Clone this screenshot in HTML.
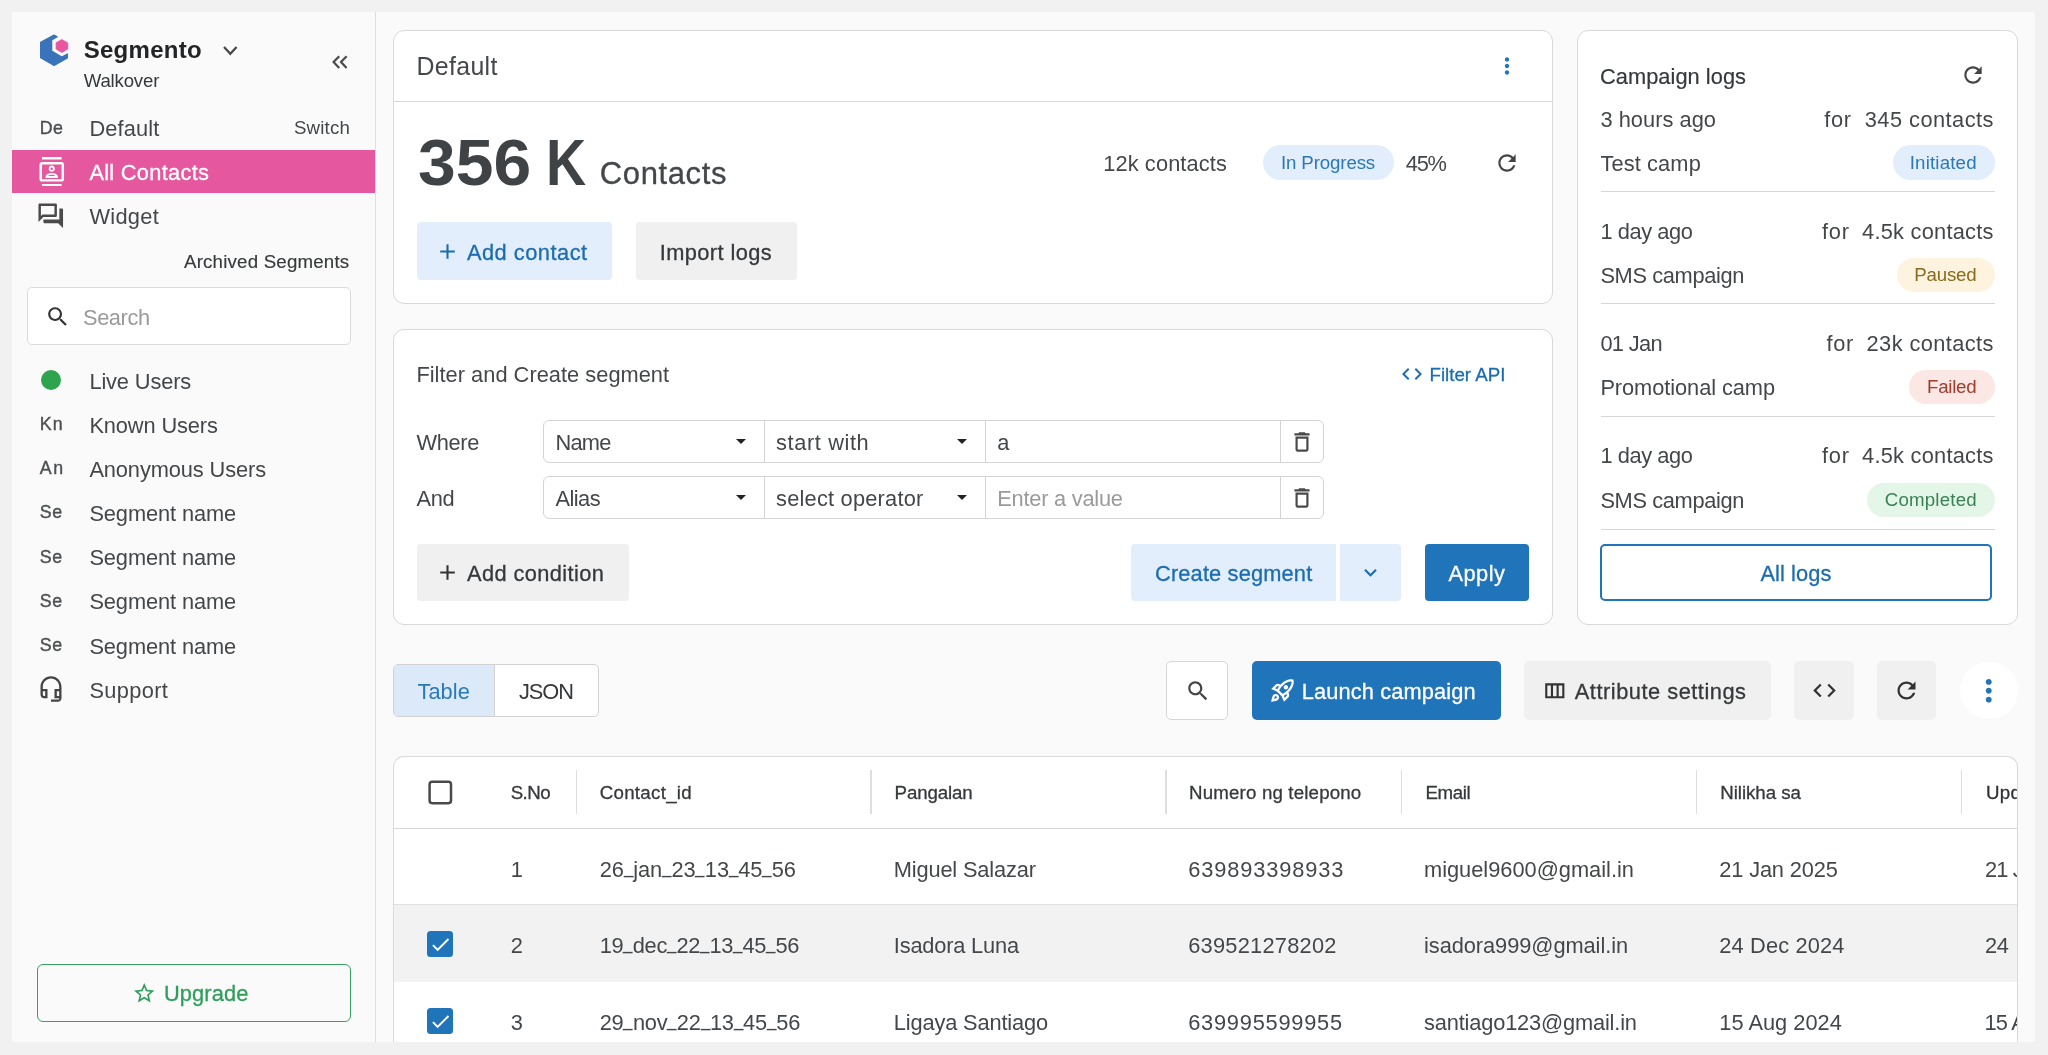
<!DOCTYPE html>
<html><head><meta charset="utf-8"><title>Segmento</title><style>
*{margin:0;padding:0;box-sizing:border-box}
html,body{width:2048px;height:1055px;overflow:hidden}
body{background:#f1f1f1;font-family:"Liberation Sans",sans-serif;position:relative}
#app{position:absolute;left:0;top:0;width:2048px;height:1055px;will-change:transform}
.b{position:absolute;display:block}
.t{position:absolute;white-space:nowrap;line-height:1;display:block}
.u{display:inline-block;font-style:normal;width:9.4px;transform-origin:0 50%;transform:translateY(-4.4px) scaleX(.775)}
</style></head><body>
<div id="app">
<div class="b" style="left:12px;top:12px;width:2023px;height:1030px;background:#fafafa;border-radius:3px;"></div>
<div class="b" style="left:375px;top:12px;width:1px;height:1030px;background:#dedede;"></div>
<svg class="b" style="left:38px;top:33px" width="34" height="36" viewBox="0 0 34 36">
<path fill="#3a73b9" stroke="#3a73b9" stroke-width="1.2" stroke-linejoin="round" d="M16.1 2.1 L19.2 3.8 L13.7 7 L13.7 17.9 L23.8 24 L29.4 20.9 L29.4 25.1 L16.1 32.6 L2.6 24.8 L2.6 9.3 Z"></path>
<path fill="#e7569f" stroke="#e7569f" stroke-width="0.8" stroke-linejoin="round" d="M23.8 6.5 L29.8 9.9 L29.8 16 L23.8 19.4 L18.1 16.1 L18.1 9.7 Z"></path>
</svg>
<span class="t" style="font-size: 24px; color: rgb(34, 36, 38); font-weight: 700; left: 83.7px; top: 38px; letter-spacing: 0.283px;">Segmento</span>
<svg class="b" style="left:222.2px;top:44.8px" width="16.6" height="11.4" viewBox="-2 -2 16.6 11.4"><path fill="none" stroke="#4a4a4a" stroke-width="2.3" d="M0 0 L6.3 6.9 L12.6 0"></path></svg>
<span class="t" style="font-size: 18.6px; color: rgb(54, 57, 59); left: 83.7px; top: 72px; letter-spacing: -0.159px;">Walkover</span>
<svg class="b" style="left:330.3px;top:53px" width="20" height="18" viewBox="0 0 20 18"><path fill="none" stroke="#4a4a4a" stroke-width="2.2" d="M9.2 3.3 L3.6 9.1 L9.2 14.9 M16.6 3.3 L11 9.1 L16.6 14.9"></path></svg>
<span class="t" style="font-size: 17.8px; color: rgb(77, 80, 82); -webkit-text-stroke: 0.4px rgb(77, 80, 82); left: 39.7px; top: 120px; letter-spacing: 0.466px;">De</span>
<span class="t" style="font-size: 21.8px; color: rgb(68, 71, 74); left: 89.4px; top: 118px; letter-spacing: 0.154px;">Default</span>
<span class="t" style="font-size: 18.7px; color: rgb(68, 71, 74); left: 293.9px; top: 119px; letter-spacing: 0.191px;">Switch</span>
<div class="b" style="left:12px;top:149.6px;width:363px;height:43.80000000000001px;background:#e5579f;"></div>
<svg class="b" style="left:36.55px;top:156.65px;" width="29.5" height="29.5" viewBox="0 0 24 24"><path fill="#fff" d="M20 4H4c-1.1 0-2 .9-2 2v12c0 1.1.9 2 2 2h16c1.1 0 2-.9 2-2V6c0-1.1-.9-2-2-2zm0 14H4V6h16v12zM4 0h16v2H4zm0 22h16v2H4zm8-10c1.38 0 2.5-1.12 2.5-2.5S13.38 7 12 7 9.5 8.12 9.5 9.5 10.62 12 12 12zm0-3.5c.55 0 1 .45 1 1s-.45 1-1 1-1-.45-1-1 .45-1 1-1zm5 7.49C17 13.9 13.69 13 12 13s-5 .9-5 2.99V17h10v-1.01zm-8.19-.49c.61-.52 2.03-1 3.19-1 1.17 0 2.59.48 3.2 1H8.81z"></path></svg>
<span class="t" style="font-size: 21.8px; color: rgb(255, 255, 255); -webkit-text-stroke: 0.3px rgb(255, 255, 255); left: 89.4px; top: 162px; letter-spacing: 0.291px;">All Contacts</span>
<svg class="b" style="left:36.45px;top:200.65px;" width="29.5" height="29.5" viewBox="0 0 24 24"><path fill="#4a4a4a" d="M15 4v7H5.17L4 12.17V4h11m1-2H3c-.55 0-1 .45-1 1v14l4-4h10c.55 0 1-.45 1-1V3c0-.55-.45-1-1-1zm5 4h-2v9H6v2c0 .55.45 1 1 1h11l4 4V7c0-.55-.45-1-1-1z"></path></svg>
<span class="t" style="font-size: 21.8px; color: rgb(68, 71, 74); left: 89.4px; top: 206px; letter-spacing: 0.311px;">Widget</span>
<span class="t" style="font-size: 18.7px; color: rgb(54, 57, 59); -webkit-text-stroke: 0.15px rgb(54, 57, 59); left: 184px; top: 253px; letter-spacing: 0.197px;">Archived Segments</span>
<div class="b" style="left:27px;top:286.9px;width:323.5px;height:58.200000000000045px;background:#fff;border:1.5px solid #dcdcdc;border-radius:5px;"></div>
<svg class="b" style="left:45.25px;top:304.25px;" width="25.5" height="25.5" viewBox="0 0 24 24"><path fill="#333" d="M15.5 14h-.79l-.28-.27C15.41 12.59 16 11.11 16 9.5 16 5.91 13.09 3 9.5 3S3 5.91 3 9.5 5.91 16 9.5 16c1.61 0 3.09-.59 4.23-1.57l.27.28v.79l5 4.99L20.49 19l-4.99-5zm-6 0C7.01 14 5 11.99 5 9.5S7.01 5 9.5 5 14 7.01 14 9.5 11.99 14 9.5 14z"></path></svg>
<span class="t" style="font-size: 21.8px; color: rgb(154, 154, 154); left: 83px; top: 307px; letter-spacing: -0.412px;">Search</span>
<span class="t" style="font-size: 21.8px; color: rgb(68, 71, 74); left: 89.4px; top: 371px; letter-spacing: -0.13px;">Live Users</span>
<span class="t" style="font-size: 21.8px; color: rgb(68, 71, 74); left: 89.4px; top: 415px; letter-spacing: -0.113px;">Known Users</span>
<span class="t" style="font-size: 17.8px; color: rgb(77, 80, 82); -webkit-text-stroke: 0.4px rgb(77, 80, 82); left: 39.7px; top: 416px; letter-spacing: 1.25px;">Kn</span>
<span class="t" style="font-size: 21.8px; color: rgb(68, 71, 74); left: 89.4px; top: 459px; letter-spacing: -0.1px;">Anonymous Users</span>
<span class="t" style="font-size: 17.8px; color: rgb(77, 80, 82); -webkit-text-stroke: 0.4px rgb(77, 80, 82); left: 39.7px; top: 460px; letter-spacing: 1.75px;">An</span>
<span class="t" style="font-size: 21.8px; color: rgb(68, 71, 74); left: 89.4px; top: 503px; letter-spacing: -0.093px;">Segment name</span>
<span class="t" style="font-size: 17.8px; color: rgb(77, 80, 82); -webkit-text-stroke: 0.4px rgb(77, 80, 82); left: 39.7px; top: 504px; letter-spacing: 0.75px;">Se</span>
<span class="t" style="font-size: 21.8px; color: rgb(68, 71, 74); left: 89.4px; top: 547px; letter-spacing: -0.093px;">Segment name</span>
<span class="t" style="font-size: 17.8px; color: rgb(77, 80, 82); -webkit-text-stroke: 0.4px rgb(77, 80, 82); left: 39.7px; top: 549px; letter-spacing: 0.75px;">Se</span>
<span class="t" style="font-size: 21.8px; color: rgb(68, 71, 74); left: 89.4px; top: 591px; letter-spacing: -0.093px;">Segment name</span>
<span class="t" style="font-size: 17.8px; color: rgb(77, 80, 82); -webkit-text-stroke: 0.4px rgb(77, 80, 82); left: 39.7px; top: 593px; letter-spacing: 0.75px;">Se</span>
<span class="t" style="font-size: 21.8px; color: rgb(68, 71, 74); left: 89.4px; top: 636px; letter-spacing: -0.093px;">Segment name</span>
<span class="t" style="font-size: 17.8px; color: rgb(77, 80, 82); -webkit-text-stroke: 0.4px rgb(77, 80, 82); left: 39.7px; top: 637px; letter-spacing: 0.75px;">Se</span>
<span class="t" style="font-size: 21.8px; color: rgb(68, 71, 74); left: 89.4px; top: 680px; letter-spacing: 0.343px;">Support</span>
<div class="b" style="left:41.3px;top:369.8px;width:20px;height:20px;border-radius:50%;background:#2ea44f"></div>
<svg class="b" style="left:37.30px;top:675.00px;" width="28" height="28" viewBox="0 0 24 24"><path fill="#444" d="M19 14v4h-2v-4h2M7 14v4H6c-.55 0-1-.45-1-1v-3h2m5-13c-4.97 0-9 4.03-9 9v7c0 1.66 1.34 3 3 3h3v-8H5v-2c0-3.87 3.13-7 7-7s7 3.13 7 7v2h-4v8h4v1h-7v2h6c1.66 0 3-1.34 3-3V10c0-4.97-4.03-9-9-9z"></path></svg>
<div class="b" style="left:36.7px;top:963.5px;width:314.3px;height:58.5px;border:1.7px solid #37a062;border-radius:6px;"></div>
<svg class="b" style="left:132.35px;top:980.95px;" width="24.5" height="24.5" viewBox="0 0 24 24"><path fill="#2f9e5b" d="M22 9.24l-7.19-.62L12 2 9.19 8.63 2 9.24l5.46 4.73L5.82 21 12 17.27 18.18 21l-1.63-7.03L22 9.24zM12 15.4l-3.76 2.27 1-4.28-3.32-2.88 4.38-.38L12 6.1l1.71 4.04 4.38.38-3.32 2.88 1 4.28L12 15.4z"></path></svg>
<span class="t" style="font-size: 21.8px; color: rgb(47, 158, 91); -webkit-text-stroke: 0.3px rgb(47, 158, 91); left: 164px; top: 983px; letter-spacing: 0.129px;">Upgrade</span>
<div class="b" style="left:393px;top:30px;width:1160px;height:274px;background:#fff;border:1px solid #d9d9d9;border-radius:11px;"></div>
<div class="b" style="left:394px;top:101px;width:1158px;height:1px;background:#d9d9d9;"></div>
<span class="t" style="font-size: 24.9px; color: rgb(68, 71, 74); left: 416.4px; top: 54px; letter-spacing: 0.354px;">Default</span>
<svg class="b" style="left:1494.00px;top:53.40px;" width="26" height="26" viewBox="0 0 24 24"><path fill="#2074ba" d="M12 8c1.1 0 2-.9 2-2s-.9-2-2-2-2 .9-2 2 .9 2 2 2zm0 2c-1.1 0-2 .9-2 2s.9 2 2 2 2-.9 2-2-.9-2-2-2zm0 6c-1.1 0-2 .9-2 2s.9 2 2 2 2-.9 2-2-.9-2-2-2z"></path></svg>
<span class="t" style="font-size: 64px; color: rgb(64, 67, 69); font-weight: 700; transform: scaleX(1.06); transform-origin: 0px 0px; left: 417.9px; top: 131px;">356</span>
<span class="t" style="font-size: 64px; color: rgb(64, 67, 69); font-weight: 700; transform: scaleX(0.868); transform-origin: 0px 0px; left: 546.1px; top: 131px;">K</span>
<span class="t" style="font-size: 31px; color: rgb(68, 71, 74); -webkit-text-stroke: 0.3px rgb(68, 71, 74); left: 599.8px; top: 158px; letter-spacing: 0.608px;">Contacts</span>
<span class="t" style="font-size: 21.8px; color: rgb(68, 71, 74); left: 1103.2px; top: 153px; letter-spacing: 0.12px;">12k contacts</span>
<div class="b" style="left:1262.8px;top:145.3px;width:130.79999999999995px;height:34.79999999999998px;background:#e2eefb;border-radius:18px;"></div>
<span class="t" style="font-size: 18.7px; color: rgb(42, 120, 184); left: 1281px; top: 154px; letter-spacing: -0.136px;">In Progress</span>
<span class="t" style="font-size: 21.8px; color: rgb(68, 71, 74); left: 1405.7px; top: 153px; letter-spacing: -1.17px;">45%</span>
<svg class="b" style="left:1494.20px;top:149.50px;" width="26" height="26" viewBox="0 0 24 24"><path fill="#444" d="M17.65 6.35C16.2 4.9 14.21 4 12 4c-4.42 0-7.99 3.58-7.99 8s3.57 8 7.99 8c3.73 0 6.84-2.55 7.73-6h-2.08c-.82 2.33-3.04 4-5.65 4-3.31 0-6-2.69-6-6s2.69-6 6-6c1.66 0 3.14.69 4.22 1.78L13 11h7V4l-2.35 2.35z"></path></svg>
<div class="b" style="left:417px;top:222px;width:195px;height:58px;background:#e2eefb;border-radius:4px;"></div>
<svg class="b" style="left:434.70px;top:239.10px;" width="25" height="25" viewBox="0 0 24 24"><path fill="#1b6cb0" d="M19 13h-6v6h-2v-6H5v-2h6V5h2v6h6v2z"></path></svg>
<span class="t" style="font-size: 21.8px; color: rgb(27, 108, 176); -webkit-text-stroke: 0.3px rgb(27, 108, 176); left: 466.9px; top: 242px; letter-spacing: 0.517px;">Add contact</span>
<div class="b" style="left:636px;top:222px;width:161px;height:58px;background:#f0f0f0;border-radius:4px;"></div>
<span class="t" style="font-size: 21.8px; color: rgb(54, 57, 59); -webkit-text-stroke: 0.3px rgb(54, 57, 59); left: 659.8px; top: 242px; letter-spacing: 0.397px;">Import logs</span>
<div class="b" style="left:393px;top:329px;width:1160px;height:296px;background:#fff;border:1px solid #d9d9d9;border-radius:11px;"></div>
<span class="t" style="font-size: 21.8px; color: rgb(68, 71, 74); left: 416.4px; top: 364px; letter-spacing: 0.029px;">Filter and Create segment</span>
<svg class="b" style="left:1399.90px;top:362.20px;" width="24" height="24" viewBox="0 0 24 24"><path fill="#1b6cb0" d="M9.4 16.6L4.8 12l4.6-4.6L8 6l-6 6 6 6 1.4-1.4zm5.2 0l4.6-4.6-4.6-4.6L16 6l6 6-6 6-1.4-1.4z"></path></svg>
<span class="t" style="font-size: 18.7px; color: rgb(27, 108, 176); -webkit-text-stroke: 0.3px rgb(27, 108, 176); left: 1429.5px; top: 366px; letter-spacing: 0.01px;">Filter API</span>
<span class="t" style="font-size: 21.8px; color: rgb(68, 71, 74); left: 416.4px; top: 432px; letter-spacing: -0.326px;">Where</span>
<div class="b" style="left:543px;top:420px;width:781px;height:43px;background:#fff;border:1px solid #d4d4d4;border-radius:6px;"></div>
<div class="b" style="left:764px;top:420px;width:1px;height:43px;background:#d4d4d4;"></div>
<div class="b" style="left:985px;top:420px;width:1px;height:43px;background:#d4d4d4;"></div>
<div class="b" style="left:1280px;top:420px;width:1px;height:43px;background:#d4d4d4;"></div>
<span class="t" style="font-size: 21.8px; color: rgb(68, 71, 74); left: 555.4px; top: 432px; letter-spacing: -0.719px;">Name</span>
<span class="t" style="font-size: 21.8px; color: rgb(68, 71, 74); left: 776.1px; top: 432px; letter-spacing: 0.598px;">start with</span>
<span class="t" style="font-size: 21.8px; color: rgb(68, 71, 74); left: 997.3px; top: 432px;">a</span>
<svg class="b" style="left:736px;top:438.75px" width="10" height="5" viewBox="0 0 10 5"><path fill="#222" d="M0 0h10L5 5z"></path></svg>
<svg class="b" style="left:956.8px;top:438.75px" width="10" height="5" viewBox="0 0 10 5"><path fill="#222" d="M0 0h10L5 5z"></path></svg>
<svg class="b" style="left:1289.30px;top:428.65px;" width="26" height="26" viewBox="0 0 24 24"><path fill="#4a4a4a" d="M6 19c0 1.1.9 2 2 2h8c1.1 0 2-.9 2-2V7H6v12zM8 9h8v10H8V9zm7.5-5l-1-1h-5l-1 1H5v2h14V4h-3.5z"></path></svg>
<span class="t" style="font-size: 21.8px; color: rgb(68, 71, 74); left: 416.4px; top: 488px; letter-spacing: -0.248px;">And</span>
<div class="b" style="left:543px;top:476px;width:781px;height:43px;background:#fff;border:1px solid #d4d4d4;border-radius:6px;"></div>
<div class="b" style="left:764px;top:476px;width:1px;height:43px;background:#d4d4d4;"></div>
<div class="b" style="left:985px;top:476px;width:1px;height:43px;background:#d4d4d4;"></div>
<div class="b" style="left:1280px;top:476px;width:1px;height:43px;background:#d4d4d4;"></div>
<span class="t" style="font-size: 21.8px; color: rgb(68, 71, 74); left: 555.4px; top: 488px; letter-spacing: -0.512px;">Alias</span>
<span class="t" style="font-size: 21.8px; color: rgb(68, 71, 74); left: 776.1px; top: 488px; letter-spacing: 0.215px;">select operator</span>
<span class="t" style="font-size: 21.8px; color: rgb(154, 154, 154); left: 997.3px; top: 488px; letter-spacing: -0.229px;">Enter a value</span>
<svg class="b" style="left:736px;top:495.0px" width="10" height="5" viewBox="0 0 10 5"><path fill="#222" d="M0 0h10L5 5z"></path></svg>
<svg class="b" style="left:956.8px;top:495.0px" width="10" height="5" viewBox="0 0 10 5"><path fill="#222" d="M0 0h10L5 5z"></path></svg>
<svg class="b" style="left:1289.30px;top:484.90px;" width="26" height="26" viewBox="0 0 24 24"><path fill="#4a4a4a" d="M6 19c0 1.1.9 2 2 2h8c1.1 0 2-.9 2-2V7H6v12zM8 9h8v10H8V9zm7.5-5l-1-1h-5l-1 1H5v2h14V4h-3.5z"></path></svg>
<div class="b" style="left:417px;top:543.8px;width:211.70000000000005px;height:57.700000000000045px;background:#f0f0f0;border-radius:4px;"></div>
<svg class="b" style="left:434.90px;top:560.30px;" width="25" height="25" viewBox="0 0 24 24"><path fill="#333" d="M19 13h-6v6h-2v-6H5v-2h6V5h2v6h6v2z"></path></svg>
<span class="t" style="font-size: 21.8px; color: rgb(54, 57, 59); -webkit-text-stroke: 0.3px rgb(54, 57, 59); left: 467.1px; top: 563px; letter-spacing: 0.392px;">Add condition</span>
<div class="b" style="left:1131.4px;top:543.6px;width:204.69999999999982px;height:57.89999999999998px;background:#e2eefb;border-radius:4px 0 0 4px;"></div>
<span class="t" style="font-size: 21.8px; color: rgb(27, 108, 176); -webkit-text-stroke: 0.3px rgb(27, 108, 176); left: 1155px; top: 563px; letter-spacing: 0.162px;">Create segment</span>
<div class="b" style="left:1339.7px;top:543.6px;width:61.0px;height:57.89999999999998px;background:#e2eefb;border-radius:0 4px 4px 0;"></div>
<svg class="b" style="left:1358.10px;top:560.10px;" width="25" height="25" viewBox="0 0 24 24"><path fill="#1b6cb0" d="M16.59 8.59L12 13.17 7.41 8.59 6 10l6 6 6-6z"></path></svg>
<div class="b" style="left:1425px;top:543.6px;width:104px;height:57.89999999999998px;background:#2074ba;border-radius:4px;"></div>
<span class="t" style="font-size: 21.8px; color: rgb(255, 255, 255); -webkit-text-stroke: 0.3px rgb(255, 255, 255); left: 1448.6px; top: 563px; letter-spacing: 0.417px;">Apply</span>
<div class="b" style="left:1577px;top:30px;width:441px;height:595px;background:#fff;border:1px solid #d9d9d9;border-radius:11px;"></div>
<span class="t" style="font-size: 21.8px; color: rgb(54, 57, 59); -webkit-text-stroke: 0.2px rgb(54, 57, 59); left: 1600px; top: 66px; letter-spacing: 0.049px;">Campaign logs</span>
<svg class="b" style="left:1959.80px;top:62.20px;" width="26" height="26" viewBox="0 0 24 24"><path fill="#444" d="M17.65 6.35C16.2 4.9 14.21 4 12 4c-4.42 0-7.99 3.58-7.99 8s3.57 8 7.99 8c3.73 0 6.84-2.55 7.73-6h-2.08c-.82 2.33-3.04 4-5.65 4-3.31 0-6-2.69-6-6s2.69-6 6-6c1.66 0 3.14.69 4.22 1.78L13 11h7V4l-2.35 2.35z"></path></svg>
<span class="t" style="font-size: 21.8px; color: rgb(68, 71, 74); left: 1600.4px; top: 109px; letter-spacing: 0.046px;">3 hours ago</span>
<span class="t" style="font-size: 21.8px; color: rgb(68, 71, 74); left: 1824.2px; top: 109px; letter-spacing: 0.681px;">for</span>
<span class="t" style="font-size: 21.8px; color: rgb(68, 71, 74); left: 1864.8px; top: 109px; letter-spacing: 0.454px;">345 contacts</span>
<span class="t" style="font-size: 21.8px; color: rgb(68, 71, 74); left: 1600.4px; top: 153px; letter-spacing: 0.132px;">Test camp</span>
<div class="b" style="left:1892.7px;top:145px;width:101.89999999999986px;height:34.900000000000006px;background:#e2eefb;border-radius:18px;"></div>
<span class="t" style="font-size: 18.7px; color: rgb(42, 120, 184); left: 1909.7px; top: 154px; letter-spacing: 0.181px;">Initiated</span>
<div class="b" style="left:1601px;top:191px;width:394px;height:1px;background:#d6d6d6;"></div>
<span class="t" style="font-size: 21.8px; color: rgb(68, 71, 74); left: 1600.4px; top: 221px; letter-spacing: -0.406px;">1 day ago</span>
<span class="t" style="font-size: 21.8px; color: rgb(68, 71, 74); left: 1822.1px; top: 221px; letter-spacing: 0.681px;">for</span>
<span class="t" style="font-size: 21.8px; color: rgb(68, 71, 74); left: 1862.1px; top: 221px; letter-spacing: 0.239px;">4.5k contacts</span>
<span class="t" style="font-size: 21.8px; color: rgb(68, 71, 74); left: 1600.4px; top: 265px; letter-spacing: -0.347px;">SMS campaign</span>
<div class="b" style="left:1896.7px;top:258px;width:97.89999999999986px;height:34px;background:#fdf3de;border-radius:18px;"></div>
<span class="t" style="font-size: 18.7px; color: rgb(138, 106, 28); left: 1914.3px; top: 266px; letter-spacing: -0.218px;">Paused</span>
<div class="b" style="left:1601px;top:303px;width:394px;height:1px;background:#d6d6d6;"></div>
<span class="t" style="font-size: 21.8px; color: rgb(68, 71, 74); left: 1600.4px; top: 333px; letter-spacing: -0.651px;">01 Jan</span>
<span class="t" style="font-size: 21.8px; color: rgb(68, 71, 74); left: 1826.4px; top: 333px; letter-spacing: 0.681px;">for</span>
<span class="t" style="font-size: 21.8px; color: rgb(68, 71, 74); left: 1866.6px; top: 333px; letter-spacing: 0.402px;">23k contacts</span>
<span class="t" style="font-size: 21.8px; color: rgb(68, 71, 74); left: 1600.4px; top: 377px; letter-spacing: -0.065px;">Promotional camp</span>
<div class="b" style="left:1909.4px;top:370px;width:85.19999999999982px;height:34.30000000000001px;background:#fbe7e4;border-radius:18px;"></div>
<span class="t" style="font-size: 18.7px; color: rgb(162, 59, 44); left: 1927px; top: 378px; letter-spacing: -0.261px;">Failed</span>
<div class="b" style="left:1601px;top:416px;width:394px;height:1px;background:#d6d6d6;"></div>
<span class="t" style="font-size: 21.8px; color: rgb(68, 71, 74); left: 1600.4px; top: 445px; letter-spacing: -0.406px;">1 day ago</span>
<span class="t" style="font-size: 21.8px; color: rgb(68, 71, 74); left: 1822.1px; top: 445px; letter-spacing: 0.681px;">for</span>
<span class="t" style="font-size: 21.8px; color: rgb(68, 71, 74); left: 1862.1px; top: 445px; letter-spacing: 0.239px;">4.5k contacts</span>
<span class="t" style="font-size: 21.8px; color: rgb(68, 71, 74); left: 1600.4px; top: 490px; letter-spacing: -0.347px;">SMS campaign</span>
<div class="b" style="left:1867px;top:482.9px;width:127.59999999999991px;height:34.200000000000045px;background:#e4f6e7;border-radius:18px;"></div>
<span class="t" style="font-size: 18.7px; color: rgb(58, 130, 86); left: 1884.8px; top: 491px; letter-spacing: 0.178px;">Completed</span>
<div class="b" style="left:1601px;top:529px;width:394px;height:1px;background:#d6d6d6;"></div>
<div class="b" style="left:1600.3px;top:543.8px;width:391.29999999999995px;height:57.700000000000045px;background:#fff;border:2px solid #2074ba;border-radius:5px;"></div>
<span class="t" style="font-size: 21.8px; color: rgb(27, 108, 176); -webkit-text-stroke: 0.3px rgb(27, 108, 176); left: 1760.4px; top: 563px; letter-spacing: 0.091px;">All logs</span>
<div class="b" style="left:393px;top:664px;width:206px;height:53px;background:#fff;border:1px solid #d2d2d2;border-radius:5px;"></div>
<div class="b" style="left:394px;top:665px;width:100px;height:51px;background:#dbe9f9;border-radius:4px 0 0 4px;"></div>
<div class="b" style="left:494px;top:665px;width:1px;height:51px;background:#d2d2d2;"></div>
<span class="t" style="font-size: 21.8px; color: rgb(42, 120, 184); left: 417.5px; top: 681px; letter-spacing: 0.048px;">Table</span>
<span class="t" style="font-size: 21.8px; color: rgb(54, 57, 59); left: 518.9px; top: 681px; letter-spacing: -1.014px;">JSON</span>
<div class="b" style="left:1166px;top:661px;width:62px;height:59px;background:#fff;border:1px solid #d6d6d6;border-radius:5px;"></div>
<svg class="b" style="left:1184.60px;top:677.80px;" width="26" height="26" viewBox="0 0 24 24"><path fill="#444" d="M15.5 14h-.79l-.28-.27C15.41 12.59 16 11.11 16 9.5 16 5.91 13.09 3 9.5 3S3 5.91 3 9.5 5.91 16 9.5 16c1.61 0 3.09-.59 4.23-1.57l.27.28v.79l5 4.99L20.49 19l-4.99-5zm-6 0C7.01 14 5 11.99 5 9.5S7.01 5 9.5 5 14 7.01 14 9.5 11.99 14 9.5 14z"></path></svg>
<div class="b" style="left:1252px;top:661px;width:249px;height:59px;background:#2074ba;border-radius:5px;"></div>
<svg class="b" style="left:1268.90px;top:677.10px;" width="27" height="27" viewBox="0 0 24 24"><path fill="#fff" d="M6 15c-.83 0-1.58.34-2.12.88C2.7 17.06 2 22 2 22s4.94-.7 6.12-1.88C8.66 19.58 9 18.83 9 18c0-1.66-1.34-3-3-3zm.71 3.71c-.28.28-2.17.76-2.17.76s.47-1.88.76-2.17c.17-.19.42-.3.7-.3.55 0 1 .45 1 1 0 .28-.11.53-.29.71zm10.71-5.06c6.36-6.36 4.24-11.31 4.24-11.31S16.71.22 10.35 6.58l-2.49-.5c-.65-.13-1.33.08-1.81.55L2 10.69l5 2.14L11.17 17l2.14 5 4.05-4.05c.47-.47.68-1.15.55-1.81l-.49-2.49zM7.41 10.83l-1.91-.82 1.97-1.97 1.44.29c-.57.83-1.08 1.7-1.5 2.5zm6.58 7.67l-.82-1.91c.8-.42 1.67-.93 2.49-1.5l.29 1.44-1.96 1.97zM16 12.24c-1.32 1.32-3.38 2.4-4.04 2.73l-2.93-2.93c.32-.65 1.4-2.71 2.73-4.04 4.68-4.68 8.23-3.99 8.23-3.99s.69 3.55-3.99 8.23zM15 11c1.1 0 2-.9 2-2s-.9-2-2-2-2 .9-2 2 .9 2 2 2z"></path></svg>
<span class="t" style="font-size: 21.8px; color: rgb(255, 255, 255); -webkit-text-stroke: 0.3px rgb(255, 255, 255); left: 1301.7px; top: 681px; letter-spacing: 0.13px;">Launch campaign</span>
<div class="b" style="left:1524px;top:661px;width:247px;height:59px;background:#f0f0f0;border-radius:5px;"></div>
<svg class="b" style="left:1542.30px;top:677.80px;" width="25.6" height="25.6" viewBox="0 0 24 24"><path fill="#333" d="M3 5v14h18V5H3zm5.33 12H5V7h3.33v10zm5.34 0h-3.33V7h3.33v10zM19 17h-3.33V7H19v10z"></path></svg>
<span class="t" style="font-size: 21.8px; color: rgb(54, 57, 59); -webkit-text-stroke: 0.3px rgb(54, 57, 59); left: 1574.8px; top: 681px; letter-spacing: 0.52px;">Attribute settings</span>
<div class="b" style="left:1794px;top:661px;width:60px;height:59px;background:#f0f0f0;border-radius:5px;"></div>
<svg class="b" style="left:1810.60px;top:677.00px;" width="27" height="27" viewBox="0 0 24 24"><path fill="#333" d="M9.4 16.6L4.8 12l4.6-4.6L8 6l-6 6 6 6 1.4-1.4zm5.2 0l4.6-4.6-4.6-4.6L16 6l6 6-6 6-1.4-1.4z"></path></svg>
<div class="b" style="left:1877px;top:661px;width:59px;height:59px;background:#f0f0f0;border-radius:5px;"></div>
<svg class="b" style="left:1892.90px;top:676.80px;" width="27" height="27" viewBox="0 0 24 24"><path fill="#333" d="M17.65 6.35C16.2 4.9 14.21 4 12 4c-4.42 0-7.99 3.58-7.99 8s3.57 8 7.99 8c3.73 0 6.84-2.55 7.73-6h-2.08c-.82 2.33-3.04 4-5.65 4-3.31 0-6-2.69-6-6s2.69-6 6-6c1.66 0 3.14.69 4.22 1.78L13 11h7V4l-2.35 2.35z"></path></svg>
<div class="b" style="left:1960.2px;top:661.6px;width:57.8px;height:57.8px;border-radius:50%;background:#fff"></div>
<svg class="b" style="left:1971.25px;top:672.85px;" width="35.5" height="35.5" viewBox="0 0 24 24"><path fill="#2074ba" d="M12 8c1.1 0 2-.9 2-2s-.9-2-2-2-2 .9-2 2 .9 2 2 2zm0 2c-1.1 0-2 .9-2 2s.9 2 2 2 2-.9 2-2-.9-2-2-2zm0 6c-1.1 0-2 .9-2 2s.9 2 2 2 2-.9 2-2-.9-2-2-2z"></path></svg>
<div class="b" style="left:393px;top:756px;width:1625px;height:286px;background:#fff;border:1px solid #d9d9d9;border-bottom:none;border-radius:11px 11px 0 0;overflow:hidden"><div class="b" style="left:0;top:71px;width:1624px;height:1px;background:#d9d9d9"></div><div class="b" style="left:0;top:147px;width:1624px;height:1px;background:#e0e0e0"></div><div class="b" style="left:0;top:148px;width:1624px;height:77px;background:#f2f2f2"></div></div>
<div class="b" style="left:376px;top:1042px;width:1672px;height:13px;background:#f1f1f1;"></div>
<svg class="b" style="left:426px;top:778px" width="29" height="29" viewBox="0 0 29 29"><rect x="3.6" y="3.8" width="21.4" height="21.4" rx="2.6" fill="#fff" stroke="#4a4a4a" stroke-width="2.5"></rect></svg>
<span class="t" style="font-size: 18.7px; color: rgb(54, 57, 59); -webkit-text-stroke: 0.3px rgb(54, 57, 59); left: 510.7px; top: 784px; letter-spacing: -0.549px;">S.No</span>
<span class="t" style="font-size: 18.7px; color: rgb(54, 57, 59); -webkit-text-stroke: 0.3px rgb(54, 57, 59); left: 599.7px; top: 784px; letter-spacing: 0.295px;">Contact_id</span>
<span class="t" style="font-size: 18.7px; color: rgb(54, 57, 59); -webkit-text-stroke: 0.3px rgb(54, 57, 59); left: 894.6px; top: 784px; letter-spacing: -0.126px;">Pangalan</span>
<span class="t" style="font-size: 18.7px; color: rgb(54, 57, 59); -webkit-text-stroke: 0.3px rgb(54, 57, 59); left: 1189.1px; top: 784px; letter-spacing: 0.162px;">Numero ng telepono</span>
<span class="t" style="font-size: 18.7px; color: rgb(54, 57, 59); -webkit-text-stroke: 0.3px rgb(54, 57, 59); left: 1425.4px; top: 784px; letter-spacing: -0.359px;">Email</span>
<span class="t" style="font-size: 18.7px; color: rgb(54, 57, 59); -webkit-text-stroke: 0.3px rgb(54, 57, 59); left: 1720.2px; top: 784px; letter-spacing: -0.024px;">Nilikha sa</span>
<div class="b" style="left:575.6px;top:770.4px;width:1.7999999999999545px;height:43.5px;background:#dedede;"></div>
<div class="b" style="left:870.1px;top:770.4px;width:1.7999999999999545px;height:43.5px;background:#dedede;"></div>
<div class="b" style="left:1165.0px;top:770.4px;width:1.800000000000182px;height:43.5px;background:#dedede;"></div>
<div class="b" style="left:1400.6999999999998px;top:770.4px;width:1.800000000000182px;height:43.5px;background:#dedede;"></div>
<div class="b" style="left:1695.5px;top:770.4px;width:1.800000000000182px;height:43.5px;background:#dedede;"></div>
<div class="b" style="left:1960.6px;top:770.4px;width:1.800000000000182px;height:43.5px;background:#dedede;"></div>
<div class="b" style="left:1980px;top:760px;width:37.2px;height:282px;overflow:hidden"><span class="t" style="font-size: 18.7px; color: rgb(46, 48, 50); -webkit-text-stroke: 0.3px rgb(46, 48, 50); letter-spacing: 0.4px; left: 5.9px; top: 24px;">Updated</span><span class="t" style="font-size: 21.8px; color: rgb(68, 71, 74); letter-spacing: -0.8px; left: 4.9px; top: 99px;">21 Jan</span><span class="t" style="font-size: 21.8px; color: rgb(68, 71, 74); letter-spacing: -0.2px; left: 4.9px; top: 175px;">24</span><span class="t" style="font-size: 21.8px; color: rgb(68, 71, 74); letter-spacing: -0.8px; left: 4.5px; top: 252px;">15 Aug</span></div>
<span class="t" style="font-size: 21.8px; color: rgb(68, 71, 74); left: 510.7px; top: 859px;">1</span>
<span class="t" style="font-size: 21.8px; color: rgb(68, 71, 74); left: 599.7px; top: 859px; letter-spacing: -0.088px;">26<i class="u">_</i>jan<i class="u">_</i>23<i class="u">_</i>13<i class="u">_</i>45<i class="u">_</i>56</span>
<span class="t" style="font-size: 21.8px; color: rgb(68, 71, 74); left: 893.8px; top: 859px; letter-spacing: -0.159px;">Miguel Salazar</span>
<span class="t" style="font-size: 21.8px; color: rgb(68, 71, 74); left: 1188.2px; top: 859px; letter-spacing: 0.894px;">639893398933</span>
<span class="t" style="font-size: 21.8px; color: rgb(68, 71, 74); left: 1424px; top: 859px; letter-spacing: -0.002px;">miguel9600@gmail.in</span>
<span class="t" style="font-size: 21.8px; color: rgb(68, 71, 74); left: 1719.3px; top: 859px; letter-spacing: -0.15px;">21 Jan 2025</span>
<span class="t" style="font-size: 21.8px; color: rgb(68, 71, 74); left: 510.7px; top: 935px;">2</span>
<span class="t" style="font-size: 21.8px; color: rgb(68, 71, 74); left: 599.7px; top: 935px; letter-spacing: -0.298px;">19<i class="u">_</i>dec<i class="u">_</i>22<i class="u">_</i>13<i class="u">_</i>45<i class="u">_</i>56</span>
<span class="t" style="font-size: 21.8px; color: rgb(68, 71, 74); left: 893.8px; top: 935px; letter-spacing: -0.186px;">Isadora Luna</span>
<span class="t" style="font-size: 21.8px; color: rgb(68, 71, 74); left: 1188.2px; top: 935px; letter-spacing: 0.248px;">639521278202</span>
<span class="t" style="font-size: 21.8px; color: rgb(68, 71, 74); left: 1424px; top: 935px; letter-spacing: -0.055px;">isadora999@gmail.in</span>
<span class="t" style="font-size: 21.8px; color: rgb(68, 71, 74); left: 1719.3px; top: 935px; letter-spacing: 0.149px;">24 Dec 2024</span>
<span class="t" style="font-size: 21.8px; color: rgb(68, 71, 74); left: 510.7px; top: 1012px;">3</span>
<span class="t" style="font-size: 21.8px; color: rgb(68, 71, 74); left: 599.7px; top: 1012px; letter-spacing: -0.227px;">29<i class="u">_</i>nov<i class="u">_</i>22<i class="u">_</i>13<i class="u">_</i>45<i class="u">_</i>56</span>
<span class="t" style="font-size: 21.8px; color: rgb(68, 71, 74); left: 893.8px; top: 1012px; letter-spacing: -0.146px;">Ligaya Santiago</span>
<span class="t" style="font-size: 21.8px; color: rgb(68, 71, 74); left: 1188.2px; top: 1012px; letter-spacing: 0.766px;">639995599955</span>
<span class="t" style="font-size: 21.8px; color: rgb(68, 71, 74); left: 1424px; top: 1012px; letter-spacing: -0.159px;">santiago123@gmail.in</span>
<span class="t" style="font-size: 21.8px; color: rgb(68, 71, 74); left: 1719.3px; top: 1012px; letter-spacing: 0.006px;">15 Aug 2024</span>
<div class="b" style="left:426.8px;top:931.0999999999999px;width:26.599999999999966px;height:26.40000000000009px;background:#2074ba;border-radius:3.5px;"></div>
<svg class="b" style="left:428.60px;top:933.00px;" width="23" height="23" viewBox="0 0 24 24"><path fill="#fff" d="M9 16.17L4.83 12l-1.42 1.41L9 19 21 7l-1.41-1.41z"></path></svg>
<div class="b" style="left:426.8px;top:1007.6999999999999px;width:26.599999999999966px;height:26.399999999999977px;background:#2074ba;border-radius:3.5px;"></div>
<svg class="b" style="left:428.60px;top:1009.60px;" width="23" height="23" viewBox="0 0 24 24"><path fill="#fff" d="M9 16.17L4.83 12l-1.42 1.41L9 19 21 7l-1.41-1.41z"></path></svg>
</div>

</body></html>
